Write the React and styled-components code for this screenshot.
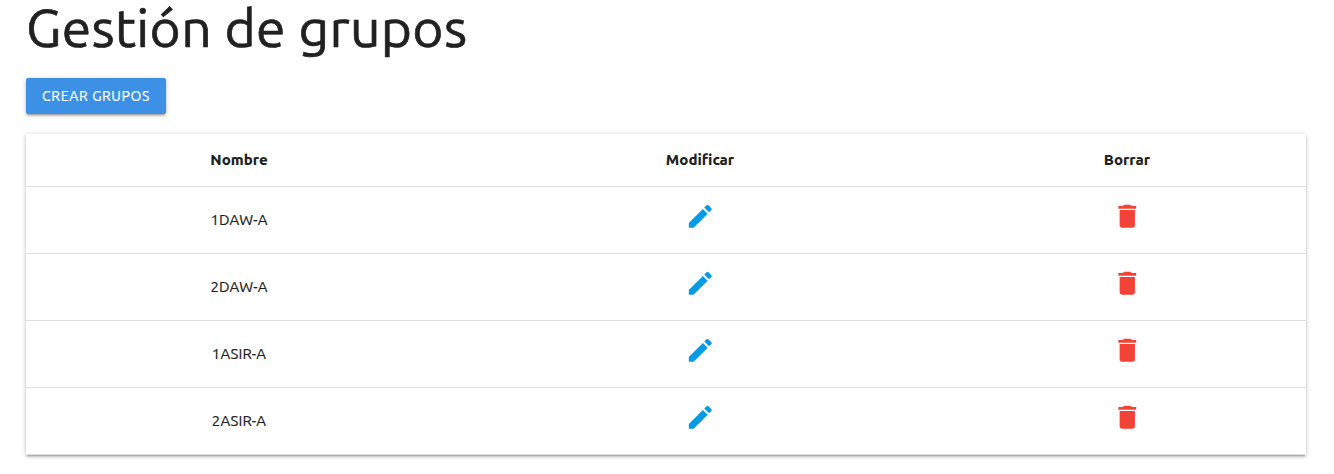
import React from "react";
import styled, { createGlobalStyle } from "styled-components";

const GlobalStyle = createGlobalStyle`
  * { box-sizing: border-box; }
  body {
    margin: 0;
    background: #fff;
    color: #212121;
    font-family: Ubuntu, "Ubuntu Sans", "Noto Sans", sans-serif;
    font-size: 15px;
    line-height: 1.5;
  }
`;

const Page = styled.main`
  padding: 0 28px 19px 26px;
`;

const Title = styled.h1`
  margin: 0 0 20px;
  height: 58px;
  font-size: 53.4px;
  font-weight: 400;
  line-height: 55px;
  letter-spacing: 0.32px;
  -webkit-text-stroke: 0.7px currentColor;
`;

const CreateButton = styled.button`
  display: block;
  width: 140px;
  height: 36px;
  margin: 0 0 20px;
  padding: 0;
  border: 0;
  border-radius: 2px;
  background: #3c91e6;
  color: #fff;
  font: 400 14px/36px Ubuntu, "Ubuntu Sans", "Noto Sans", sans-serif;
  letter-spacing: 0.6px;
  -webkit-text-stroke: 0.2px currentColor;
  text-transform: uppercase;
  white-space: nowrap;
  box-shadow: 0 2px 2px 0 rgba(0, 0, 0, 0.14), 0 3px 1px -2px rgba(0, 0, 0, 0.12),
    0 1px 5px 0 rgba(0, 0, 0, 0.2);
`;

const Table = styled.div`
  box-shadow: 0 2px 2px 0 rgba(0, 0, 0, 0.14), 0 3px 1px -2px rgba(0, 0, 0, 0.12),
    0 1px 5px 0 rgba(0, 0, 0, 0.2);
`;

const Row = styled.div`
  display: grid;
  grid-template-columns: 426px 496px 358px;
  height: ${(p) => (p.$head ? 53 : 67)}px;
  border-bottom: 1px solid rgba(0, 0, 0, 0.12);
  font-weight: ${(p) => (p.$head ? 800 : 400)};
  letter-spacing: ${(p) => (p.$head ? 0 : 0.1)}px;
  -webkit-text-stroke: ${(p) => (p.$head ? 0 : 0.2)}px currentColor;
`;

const Cell = styled.div`
  display: flex;
  align-items: center;
  justify-content: center;
`;

const Icon = styled.svg`
  display: block;
  width: 30.6px;
  height: 30.6px;
  margin-bottom: 7.4px;
  fill: ${(p) => p.$color};
`;

const groups = ["1DAW-A", "2DAW-A", "1ASIR-A", "2ASIR-A"];

export default function App() {
  return (
    <>
      <GlobalStyle />
      <Page>
        <Title>Gestión de grupos</Title>
        <CreateButton>Crear grupos</CreateButton>
        <Table>
          <Row $head>
            <Cell>Nombre</Cell>
            <Cell>Modificar</Cell>
            <Cell>Borrar</Cell>
          </Row>
          {groups.map((name) => (
            <Row key={name}>
              <Cell>{name}</Cell>
              <Cell>
                <Icon $color="#039be5" viewBox="0 0 24 24">
                  <path d="M3 17.25V21h3.75L17.81 9.94l-3.75-3.75L3 17.25zM20.71 7.04a.996.996 0 0 0 0-1.41l-2.34-2.34a.996.996 0 0 0-1.41 0l-1.83 1.83 3.75 3.75 1.83-1.83z" />
                </Icon>
              </Cell>
              <Cell>
                <Icon $color="#f44336" viewBox="0 0 24 24">
                  <path d="M6 19c0 1.1.9 2 2 2h8c1.1 0 2-.9 2-2V7H6v12zM19 4h-3.500l-1-1h-5l-1 1H5v2h14V4z" />
                </Icon>
              </Cell>
            </Row>
          ))}
        </Table>
      </Page>
    </>
  );
}
